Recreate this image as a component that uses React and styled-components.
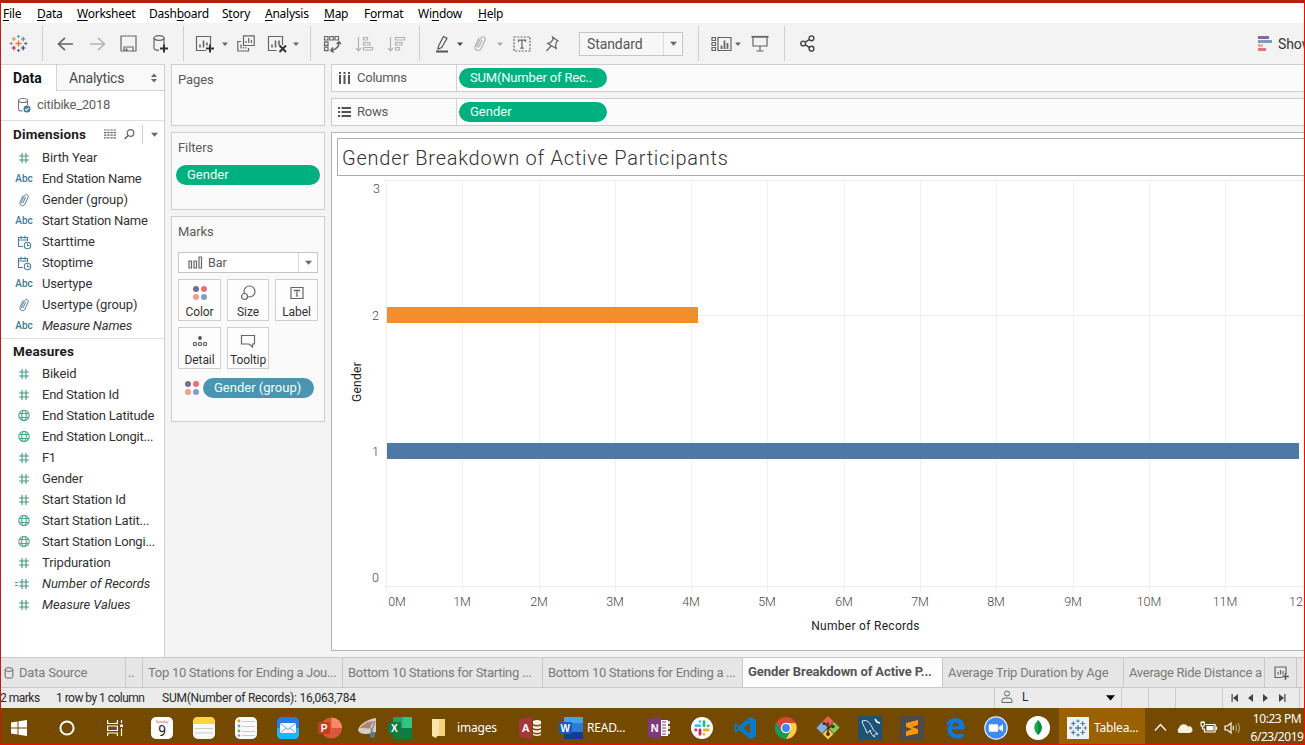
import React from "react";
import styled, { createGlobalStyle } from "styled-components";

const Global = createGlobalStyle`
  * { box-sizing: border-box; }
  body { margin: 0; overflow: hidden; font-family: Roboto, "Liberation Sans", sans-serif; font-size: 13px; color: #333; }
  svg { display: block; flex: none; overflow: visible; }
`;

const Screen = styled.div`
  position: relative;
  width: 1305px;
  height: 745px;
  display: flex;
  flex-direction: column;
  background: #f4f4f4;
  overflow: hidden;
  white-space: nowrap;
  &::after {
    content: "";
    position: absolute;
    inset: 0;
    border: solid #c11d0c;
    border-width: 3px 1px 1px 1px;
    border-top-color: #b5210c;
    border-right-color: #f00a00;
    border-bottom-color: #f00a00;
    pointer-events: none;
  }
`;

/* Menu bar */
const MenuBar = styled.div`
  height: 23px;
  flex: none;
  padding: 4px 0 0 3px;
  display: flex;
  background: #fff;
  font: 12px/20px "Noto Sans", "Open Sans", sans-serif;
  color: #000;
`;
const MenuItem = styled.span`
  width: ${(p) => p.$w}px;
  letter-spacing: -0.25px;
  flex: none;
  u { text-underline-offset: 2px; }
`;

/* Toolbar */
const Toolbar = styled.div`
  height: 41px;
  flex: none;
  display: flex;
  align-items: center;
  background: #f3f3f3;
`;
const Tool = styled.div`
  width: ${(p) => p.$w}px;
  margin-left: ${(p) => p.$ml}px;
  flex: none;
  display: flex;
  justify-content: center;
`;
const Separator = styled.div`
  width: 1px;
  height: ${(p) => p.$h || 35}px;
  margin-left: ${(p) => p.$ml}px;
  flex: none;
  background: #d0d0d0;
`;
const FitSelect = styled.div`
  width: 104px;
  height: 24px;
  margin-left: 20px;
  padding-left: 7px;
  flex: none;
  display: flex;
  align-items: center;
  border: 1px solid #c6c6c6;
  background: #f7f7f7;
  color: #555;
  font-size: 14px;
  letter-spacing: -0.1px;
`;
const SelectArrow = styled.div`
  width: 19px;
  align-self: stretch;
  margin-left: auto;
  display: flex;
  align-items: center;
  justify-content: center;
  border-left: 1px solid #dcdcdc;
`;
const ShowMe = styled.span`
  margin-left: 6px;
  font-size: 14px;
  letter-spacing: -0.1px;
  color: #333;
`;

/* Workspace */
const Workspace = styled.div`
  height: 593px;
  flex: none;
  display: flex;
`;
const Sidebar = styled.aside`
  width: 165px;
  flex: none;
  background: #fff;
  border-right: 1px solid #cfcfcf;
`;
const SideTabs = styled.div`
  display: flex;
  height: 27px;
`;
const SideTab = styled.div`
  width: ${(p) => p.$w}px;
  padding: 0 7px 0 ${(p) => (p.$active ? 13 : 12)}px;
  display: flex;
  align-items: center;
  justify-content: space-between;
  font-size: 14px;
  letter-spacing: ${(p) => (p.$active ? 0 : -0.2)}px;
  font-weight: ${(p) => (p.$active ? 700 : 400)};
  color: ${(p) => (p.$active ? "#111" : "#4a4a4a")};
  background: ${(p) => (p.$active ? "#fff" : "#f9f9f9")};
  border-top: 1px solid #d4d4d4;
  ${(p) => !p.$active && "border-left: 1px solid #d4d4d4; border-bottom: 1px solid #d4d4d4;"}
`;
const Source = styled.div`
  height: 30px;
  padding: 0 0 2px 17px;
  display: flex;
  align-items: center;
  gap: 6px;
  letter-spacing: -0.25px;
  color: #606060;
  border-bottom: 1px solid #dedede;
`;
const SideHeader = styled.div`
  height: ${(p) => p.$h}px;
  padding-left: 13px;
  display: flex;
  align-items: center;
  font-size: 13.5px;
  font-weight: 700;
  letter-spacing: 0.15px;
  color: #1c1c1c;
`;
const HeaderTool = styled.div`
  margin-left: ${(p) => p.$ml}px;
`;
const FieldList = styled.div`
  padding-bottom: 2px;
  border-bottom: ${(p) => (p.$last ? 0 : 1)}px solid #dedede;
`;
const Field = styled.div`
  height: 21px;
  display: flex;
  align-items: center;
  font-size: 13px;
  letter-spacing: ${(p) => p.$ls || 0}px;
  font-style: ${(p) => (p.$italic ? "italic" : "normal")};
  color: #333;
`;
const FieldIcon = styled.div`
  width: 42px;
  padding-left: 6px;
  flex: none;
  display: flex;
  justify-content: center;
  font: 500 10px Roboto, sans-serif;
  letter-spacing: 0;
  color: #3f7896;
`;

const Shelves = styled.div`
  width: 154px;
  margin-left: 6px;
  flex: none;
  display: flex;
  flex-direction: column;
  gap: 6px;
`;
const Card = styled.section`
  height: ${(p) => p.$h}px;
  padding: 7px 4px 0 6px;
  background: #fafafa;
  border: 1px solid #d0d0d0;
  color: #5a5a5a;
`;
const CardTitle = styled.div`
  height: 16px;
  line-height: 16px;
  letter-spacing: -0.1px;
`;
const Pill = styled.div`
  width: ${(p) => p.$w}px;
  height: 20px;
  padding-left: 11px;
  flex: none;
  border-radius: 10px;
  background: ${(p) => p.$bg || "#00b180"};
  color: #f2fffb;
  font-size: 13px;
  line-height: 19px;
  letter-spacing: ${(p) => p.$ls || 0}px;
`;
const FilterPill = styled(Pill)`
  margin: 9px 0 0 -2px;
`;
const MarkSelect = styled.div`
  width: 140px;
  height: 21px;
  margin-top: 12px;
  padding-left: 9px;
  display: flex;
  align-items: center;
  gap: 5px;
  border: 1px solid #c6c6c6;
  background: #fff;
  font-size: 12.5px;
`;
const MarkGrid = styled.div`
  margin-top: 6px;
  display: grid;
  grid-template-columns: 43px 42px 43px;
  column-gap: 6px;
  row-gap: 6px;
`;
const MarkButton = styled.div`
  height: 42px;
  padding-top: 5px;
  display: flex;
  flex-direction: column;
  align-items: center;
  gap: 3px;
  border: 1px solid #cecece;
  background: #fdfdfd;
  font-size: 12px;
  line-height: 17px;
  letter-spacing: -0.1px;
  color: #333;
`;
const ColorRow = styled.div`
  margin: 9px 0 0 6px;
  display: flex;
  align-items: center;
  gap: 3px;
`;

const Canvas = styled.main`
  flex: 1;
  margin-left: 6px;
  min-width: 0;
`;
const Shelf = styled.div`
  height: 28px;
  margin-bottom: 6px;
  display: flex;
  align-items: center;
  background: #fbfbfb;
  border: 1px solid #cfcfcf;
  border-right: 0;
`;
const ShelfName = styled.div`
  width: 125px;
  padding: 0 0 1px 6px;
  align-self: stretch;
  display: flex;
  align-items: center;
  gap: 6px;
  border-right: 1px solid #d4d4d4;
  margin-right: 2px;
  letter-spacing: -0.25px;
  color: #5a5a5a;
`;
const Sheet = styled.div`
  height: 519px;
  padding-top: 5px;
  background: #fff;
  border: 1px solid #b4b4b4;
  border-right: 0;
`;
const SheetTitle = styled.div`
  height: 38px;
  margin-left: 5px;
  padding-left: 4px;
  border: 1px solid #adadad;
  border-right: 0;
  font: 300 20px/39px Roboto, sans-serif;
  letter-spacing: 0.75px;
  color: #333;
`;

/* Sheet tabs and status bar */
const SheetTabs = styled.div`
  height: 31px;
  flex: none;
  display: flex;
  border-top: 1px solid #c9c9c9;
  background: #e6e6e6;
`;
const SheetTab = styled.div`
  width: ${(p) => p.$w}px;
  padding: 0 0 ${(p) => (p.$active ? 2 : 0)}px ${(p) => (p.$pl === undefined ? 5 : p.$pl)}px;
  flex: none;
  display: flex;
  align-items: center;
  gap: 5px;
  border-right: 1px solid #c9c9c9;
  border-bottom: 1px solid #c9c9c9;
  background: ${(p) => (p.$active ? "#fdfdfd" : "transparent")};
  color: ${(p) => (p.$active ? "#555" : "#7a7a7a")};
  font-weight: ${(p) => (p.$active ? 700 : 400)};
  letter-spacing: ${(p) => (p.$ls === undefined ? -0.29 : p.$ls)}px;
`;
const StatusBar = styled.div`
  height: 20px;
  flex: none;
  display: flex;
  align-items: center;
  background: #ebebeb;
  font-size: 12px;
  color: #2a2a2a;
`;
const StatusText = styled.span`
  width: ${(p) => p.$w}px;
  margin-left: ${(p) => p.$ml || 0}px;
  flex: none;
  letter-spacing: ${(p) => p.$ls || 0}px;
`;
const StatusCell = styled.div`
  width: ${(p) => p.$w}px;
  height: 20px;
  padding: 0 7px 0 5px;
  flex: none;
  display: flex;
  align-items: center;
  border-left: 1px solid #cdcdcd;
`;
const AccountCell = styled(StatusCell)`
  padding: 0 6px 2px;
`;
const PagerCell = styled(StatusCell)`
  padding: 0 13px 0 8px;
  justify-content: space-between;
`;

/* Task bar */
const TaskBar = styled.div`
  height: 37px;
  flex: none;
  padding-top: 2px;
  display: flex;
  align-items: center;
  background: #744900;
  color: #fff;
  font: 12px "Noto Sans", "Open Sans", sans-serif;
  letter-spacing: -0.2px;
`;
const TaskIcon = styled.div`
  width: ${(p) => p.$w}px;
  margin-left: ${(p) => p.$ml}px;
  flex: none;
  display: flex;
  justify-content: center;
`;
const TaskLabel = styled.span`
  width: ${(p) => p.$w}px;
  margin-left: ${(p) => p.$ml}px;
  flex: none;
`;
const ActiveTask = styled.div`
  width: 86px;
  height: 37px;
  margin: -2px 0 0 9px;
  padding: 2px 0 0 8px;
  flex: none;
  display: flex;
  align-items: center;
  background: #9a6100;
`;
const Clock = styled.div`
  width: 60px;
  margin-left: 6px;
  flex: none;
  text-align: center;
  line-height: 18px;
  letter-spacing: -0.45px;
`;

const Caret = ({ c = "#666", s = 6 }) => (
  <svg width={s} height={s} viewBox="0 0 6 6"><path d="M0 1.500h6L3 5z" fill={c} /></svg>
);
const Line = ({ w = 18, h = 18, c = "#666", sw = 1.2, children }) => (
  <svg width={w} height={h} viewBox={`0 0 ${w} ${h}`} fill="none" stroke={c} strokeWidth={sw}>{children}</svg>
);
const Plus = ({ x, y, r = 2, c, sw = 1 }) => (
  <path d={`M${x - r} ${y}h${2 * r}M${x} ${y - r}v${2 * r}`} stroke={c} strokeWidth={sw} />
);
const Dots = ({ s = 16 }) => (
  <svg width={s} height={s} viewBox="0 0 16 16">
    <circle cx="4" cy="4" r="3" fill="#7a6c90" />
    <circle cx="12" cy="4" r="3" fill="#e7707a" />
    <circle cx="4" cy="12" r="3" fill="#f0a080" />
    <circle cx="12" cy="12" r="3" fill="#7f9fc9" />
  </svg>
);
const Clip = ({ w = 14, h = 17, c = "#666" }) => (
  <svg width={w} height={h} viewBox="0 0 14 17" fill="none" stroke={c} strokeWidth="1.200">
    <path d="M9 5 6 11.500a1 1 0 0 1-1.900-.900L7.700 3.300a2.300 2.300 0 0 1 4.300 1.800L8.200 13.400a3.200 3.200 0 0 1-6-2.300L6 3" />
  </svg>
);

const HashIcon = ({ calc }) => (
  <svg width="15" height="12" viewBox="0 0 15 12" stroke="#4a9c83" strokeWidth="1.200" fill="none">
    <path d="M5 1v10M9 1v10M2 4h10M2 8h10" />
    {calc && <path d="M-2 4.500h3M-2 7.500h3" />}
  </svg>
);
const GlobeIcon = () => (
  <Line w={13} h={13} c="#4fa58a" sw={1.1}>
    <circle cx="6" cy="6.500" r="5.200" /><ellipse cx="6" cy="6.500" rx="2.300" ry="5" /><path d="M1.500 4.500h9M1.500 8.500h9" />
  </Line>
);
const DateIcon = () => (
  <Line w={14} h={14} c="#4a7f9d" sw={1.1}>
    <path d="M6 11.500H1.500v-9h9V6M1.500 5h9M4 .800v3M8 .800v3" /><circle cx="10.500" cy="10.500" r="3.200" /><path d="M10.500 8.500v2.200h2" />
  </Line>
);
const CylinderIcon = () => (
  <Line w={14} h={16} c="#777" sw={1.1}>
    <ellipse cx="6" cy="3.500" rx="4.500" ry="2" />
    <path d="M1.500 3.500v8.500c0 1.200 1.500 2 4 2M10.500 3.500V8" />
    <circle cx="10" cy="12" r="3.500" fill="#3b7ba5" stroke="none" />
    <path d="m8.300 12 1.300 1.300 2.200-2.500" stroke="#fff" />
  </Line>
);

const icons = {
  hash: <HashIcon />, calc: <HashIcon calc />, globe: <GlobeIcon />, date: <DateIcon />,
  abc: "Abc", clip: <Clip w={12} h={14} c="#4a7f9d" />,
};
const dimensions = [
  ["hash", "Birth Year", -0.1], ["abc", "End Station Name", -0.29], ["clip", "Gender (group)", -0.1],
  ["abc", "Start Station Name", -0.25], ["date", "Starttime", -0.1], ["date", "Stoptime", -0.15],
  ["abc", "Usertype", -0.15], ["clip", "Usertype (group)", -0.1], ["abc", "Measure Names", -0.15, true],
];
const measures = [
  ["hash", "Bikeid", -0.1], ["hash", "End Station Id", -0.25], ["globe", "End Station Latitude", -0.22],
  ["globe", "End Station Longit...", -0.23], ["hash", "F1", -0.5], ["hash", "Gender", -0.1],
  ["hash", "Start Station Id", -0.17], ["globe", "Start Station Latit...", -0.2],
  ["globe", "Start Station Longi...", -0.22], ["hash", "Tripduration", -0.1],
  ["calc", "Number of Records", -0.05, true], ["hash", "Measure Values", -0.1, true],
];
const Fields = ({ items, last }) => (
  <FieldList $last={last}>
    {items.map(([icon, name, ls, italic]) => (
      <Field key={name} $ls={ls} $italic={italic}><FieldIcon>{icons[icon]}</FieldIcon>{name}</Field>
    ))}
  </FieldList>
);

const TableauMark = ({ mono }) => {
  const c = (v) => (mono ? "#4b7ba8" : v);
  return (
    <svg width="19" height="19" viewBox="0 0 19 19">
      <Plus x={9.5} y={9.5} r={3} c={c("#e8762c")} sw={1.3} />
      <Plus x={4.8} y={5} r={2.2} c={c("#e8903a")} sw={1.2} />
      <Plus x={14.2} y={5} r={2.2} c={c("#5b879b")} sw={1.2} />
      <Plus x={4.8} y={14} r={2.2} c={c("#c72037")} sw={1.2} />
      <Plus x={14.2} y={14} r={2.2} c={c("#1f457e")} sw={1.2} />
      <Plus x={9.5} y={2.5} r={1.7} c={c("#7199a6")} />
      <Plus x={9.5} y={16.5} r={1.7} c={c("#5c6692")} />
      <Plus x={2.2} y={9.5} r={1.7} c={c("#7199a6")} />
      <Plus x={16.8} y={9.5} r={1.7} c={c("#5c6692")} />
    </svg>
  );
};

const months = ["0M", "1M", "2M", "3M", "4M", "5M", "6M", "7M", "8M", "9M", "10M", "11M"];
const gridX = [54, 130, 207, 283, 359, 435, 512, 588, 664, 741, 817, 893];
const AxisText = styled.text`
  font: 300 12.5px Roboto, sans-serif;
  fill: #4a4a4a;
`;
const AxisTitle = styled.text`
  font: 12px Roboto, sans-serif;
  letter-spacing: 0.3px;
  fill: #222;
`;
const Chart = () => (
  <svg width="973" height="470" viewBox="0 0 973 470">
    <g stroke="#efefef" shapeRendering="crispEdges">
      {gridX.map((x) => <path key={x} d={`M${x + 0.5} 4v411`} />)}
      <path d="M52 4.500h921M52 139.500h921M52 275.500h921M52 410.500h921" />
    </g>
    <rect x="55" y="131" width="311" height="16" fill="#f28e2b" />
    <rect x="55" y="267" width="912" height="16" fill="#4e79a7" />
    {[["3", 17], ["2", 143.5], ["1", 280], ["0", 406]].map(([t, y]) => (
      <AxisText key={t} x={t === "3" ? 48 : 47} y={y} textAnchor="end">{t}</AxisText>
    ))}
    {months.map((t, i) => (
      <AxisText key={t} x={i ? gridX[i] : 65} y="430" textAnchor="middle">{t}</AxisText>
    ))}
    <AxisText x="957" y="430">12</AxisText>
    <AxisTitle x="533.500" y="454" textAnchor="middle">Number of Records</AxisTitle>
    <AxisTitle transform="translate(29 206) rotate(-90)" textAnchor="middle">Gender</AxisTitle>
  </svg>
);

const Tile = ({ bg, children }) => (
  <svg width="22" height="22" viewBox="0 0 22 22"><rect width="22" height="22" rx="5" fill={bg} />{children}</svg>
);
const Letter = styled.text`
  font: 700 ${(p) => p.$s || 10}px "Liberation Sans", sans-serif;
  fill: #fff;
`;

function Taskbar() {
  return (
    <TaskBar>
      <TaskIcon $ml={10} $w={18}><svg width="18" height="16" viewBox="0 0 18 16" fill="#fff"><path d="M1 2.500 7.500 1.500v6H1zM8.500 1.300 17 0v7.500H8.500zM1 8.500h6.500v6L1 13.500zM8.500 8.500H17V16l-8.500-1.300z" /></svg></TaskIcon>
      <TaskIcon $ml={30} $w={18}><Line c="#fff" sw={2}><circle cx="9" cy="9" r="6.600" /></Line></TaskIcon>
      <TaskIcon $ml={30} $w={18}><Line w={18} h={16} c="#fff"><path d="M1.600 0v3.500h9.800V0M1.600 6h9.800v4.500H1.600zM1.600 16v-3h9.800v3M15.500 0v3M15.500 8.500V16" /><path d="M14.200 5.800H17" strokeWidth="2.500" /></Line></TaskIcon>
      <TaskIcon $ml={27} $w={22}><Tile bg="#fff"><text x="11" y="5.500" fontSize="4" textAnchor="middle" fill="#e04040">Sunday</text><text x="11" y="19" fontSize="14" textAnchor="middle" fill="#222" fontFamily="Roboto">9</text></Tile></TaskIcon>
      <TaskIcon $ml={20} $w={22}><Tile bg="#f8f8f6"><path d="M0 7V5q0-5 5-5h12q5 0 5 5v2z" fill="#ffd43d" /><path d="M2 11.500h18M2 16h18" stroke="#ccc" /></Tile></TaskIcon>
      <TaskIcon $ml={20} $w={22}><Tile bg="#fafafa"><g><circle cx="4" cy="4" r="1.400" fill="#f28a3a" /><circle cx="4" cy="9" r="1.400" fill="#4aa0e8" /><circle cx="4" cy="14" r="1.400" fill="#55b955" /><circle cx="4" cy="18.500" r="1.200" fill="#b06bd0" /></g><path d="M7 4.500h13M7 9.500h13M7 14.500h13M7 18.500h13" stroke="#ccc" /></Tile></TaskIcon>
      <TaskIcon $ml={20} $w={22}>
        <Tile bg="#1f7cf2"><path d="M0 11h22v6q0 5-5 5H5q-5 0-5-5z" fill="#22b4fa" /><rect x="3" y="6" width="16" height="10" rx="1.500" fill="#f4faff" /><path d="m3.500 6.500 7.500 6 7.500-6M4 15.500l5-4.500M18 15.500l-5-4.500" fill="none" stroke="#5fb2f2" /></Tile>
      </TaskIcon>
      <TaskIcon $ml={19} $w={24}><svg width="24" height="22" viewBox="0 0 24 22"><circle cx="13.500" cy="11" r="10.500" fill="#d9583b" /><path d="M13.500.500a10.500 10.500 0 0 1 10.500 10.500H13.500z" fill="#f58a66" /><rect y="5" width="12" height="12" rx="1" fill="#c43e1c" /><Letter x="2.800" y="15">P</Letter></svg></TaskIcon>
      <TaskIcon $ml={15} $w={20}><svg width="20" height="22" viewBox="0 0 20 22"><path d="M1 13C3 6 12 2 19 1v14c-5 2-16 4-18-2z" fill="#d9cdc4" /><path d="M3 11C6 7 12 4 17 4l-5 7.500z" fill="#b98072" /><path d="m10 5 6 11M18 4l-4 12" stroke="#7d8f94" strokeWidth="1.400" /><ellipse cx="15.500" cy="18" rx="2.500" ry="3.300" fill="#4f7f90" /></svg></TaskIcon>
      <TaskIcon $ml={11} $w={24}><svg width="24" height="22" viewBox="0 0 24 22"><rect x="5" width="19" height="22" rx="1" fill="#21a366" /><path d="M5 11h19v11H5z" fill="#107c41" /><path d="M14.500 0h9.500v11h-9.500z" fill="#33c481" /><rect y="5" width="13" height="12" rx="1" fill="#107c41" /><Letter x="3" y="15">X</Letter></svg></TaskIcon>
      <TaskIcon $ml={20} $w={14}><svg width="14" height="20" viewBox="0 0 14 20"><path d="M5 1h8v17H5z" fill="#f3d580" /><path d="M0 1h7v14l-3 5-4-2z" fill="#f9e6a6" /></svg></TaskIcon>
      <TaskLabel $ml={11} $w={43}>images</TaskLabel>
      <TaskIcon $ml={19} $w={22}><svg width="22" height="22" viewBox="0 0 22 22"><path d="M0 2 13 0v22L0 20z" fill="#a4373a" /><Letter x="2.800" y="15" $s={11}>A</Letter><g fill="#f6eeee"><path d="M14 4q4-2 8 0v3q-4 2-8 0zM14 8.500q4 1.800 8 0V11q-4 2-8 0zM14 12.500q4 1.800 8 0V15q-4 2-8 0zM14 16.500q4 1.800 8 0V18q-4 2-8 0z" /></g></svg></TaskIcon>
      <TaskIcon $ml={18} $w={24}><svg width="24" height="22" viewBox="0 0 24 22"><rect x="5" width="19" height="22" rx="1" fill="#2b7cd3" /><path d="M5 0h19v6H5z" fill="#41a5ee" /><path d="M5 15h19v7H5z" fill="#103f91" /><rect y="5" width="13" height="12" rx="1" fill="#185abd" /><Letter x="1.500" y="15">W</Letter></svg></TaskIcon>
      <TaskLabel $ml={4} $w={42}>READ...</TaskLabel>
      <TaskIcon $ml={19} $w={22}><svg width="22" height="22" viewBox="0 0 22 22"><path d="M0 2 13 0v22L0 20z" fill="#80397b" /><path d="M13 3h7v16h-7z" fill="#fff" /><path d="M14 5h4M14 8h4M14 11h4M14 14h4M14 17h4" stroke="#80397b" /><path d="M20 4h2v3h-2zM20 9h2v3h-2zM20 14h2v3h-2z" fill="#e6d6e5" /><Letter x="2.800" y="15" $s={11}>N</Letter></svg></TaskIcon>
      <TaskIcon $ml={21} $w={22}><svg width="22" height="22" viewBox="0 0 22 22"><circle cx="11" cy="11" r="11" fill="#fff" /><g strokeWidth="2.800" strokeLinecap="round"><path d="M9 8.700H4.800M9 4.600h-.100" stroke="#36c5f0" /><path d="M13 4.600v4.200M17.300 8.800h-.100" stroke="#2eb67d" /><path d="M13.200 13h4.100M13 17.300h.100" stroke="#ecb22e" /><path d="M9 13v4.300M4.800 13h.100" stroke="#e01e5a" /></g></svg></TaskIcon>
      <TaskIcon $ml={21} $w={23}><svg width="23" height="22" viewBox="0 0 23 22"><path d="m16 0 6 2.500v17L16 22 5 13l-3 2.500-1.500-1V7.500L2 6.500 5 9z" fill="#0a79c8" /><path d="M16 6v10l-6.500-5zM2 9v4l2-2z" fill="#744900" /></svg></TaskIcon>
      <TaskIcon $ml={18} $w={22}><svg width="22" height="22" viewBox="0 0 22 22"><circle cx="11" cy="11" r="11" fill="#db4437" /><path d="M1.500 5.500A11 11 0 0 0 11 22l5-8.500H6z" fill="#0f9d58" /><path d="M11 22A11 11 0 0 0 20.500 6H11l5 7.500z" fill="#ffcd40" /><circle cx="11" cy="11" r="5.200" fill="#fff" /><circle cx="11" cy="11" r="4" fill="#4285f4" /></svg></TaskIcon>
      <TaskIcon $ml={19} $w={24}><svg width="24" height="24" viewBox="0 0 24 24"><path d="m12 0 5.500 5.500L12 11 6.500 5.500z" fill="#e46058" /><path d="m6 6 5.500 5.500L6 17.500.500 12z" fill="#7cb0ee" /><path d="m18 6 5.500 5.500L18 17.500 12.500 12z" fill="#85c95b" /><path d="m12 12.500 5.500 5.500-5.500 5.500L6.500 18z" fill="#f3c84c" /><path d="M12 6v12M12 13l5-4M12 9 8 7.500" stroke="#4a3020" strokeWidth="1.500" fill="none" /><g fill="#4a3020"><circle cx="12" cy="18" r="1.900" /><circle cx="17" cy="10.500" r="1.800" /><circle cx="8" cy="7.500" r="1.500" /></g></svg></TaskIcon>
      <TaskIcon $ml={18} $w={24}><svg width="24" height="24" viewBox="0 0 24 24"><rect width="24" height="24" rx="2" fill="#1f5376" /><path d="M4 5c5-2 8 2 10 6 1 3 3 5 6 7-3 0-5 1-3 3-3-1-4-4-5-7-1 1-1 3-3 3-1-4-4-7-5-12z" fill="none" stroke="#e3f0f7" /><path d="m17 3 2 3 3 1" stroke="#fff" fill="none" strokeWidth="1.500" /></svg></TaskIcon>
      <TaskIcon $ml={18} $w={24}><svg width="24" height="24" viewBox="0 0 24 24"><rect width="24" height="24" rx="2" fill="#4b4b4b" /><path d="m6 7 12-3v5l-6 2 6 2v4.500L6 20v-4.500l6-2.500-6-2z" fill="#ff9800" /></svg></TaskIcon>
      <TaskIcon $ml={21} $w={20}><svg width="20" height="22" viewBox="0 0 20 22"><path d="M1 10C2 3.500 6 1 10.500 1 16.500 1 19.500 5 19.500 10v2.500H7c.200 5 7 6 11.500 3.500v4C11 23.500 2.500 20.500 2.500 13c0-3 1.500-5.500 4-7C4.500 6.500 2.500 8 1 10zm6-.800h7C14 4 7.500 4.500 7 9.200z" fill="#0c7ad8" /></svg></TaskIcon>
      <TaskIcon $ml={19} $w={24}><svg width="24" height="24" viewBox="0 0 24 24"><circle cx="12" cy="12" r="11.800" fill="#e6eefb" /><circle cx="12" cy="12" r="10.600" fill="#3d8bf7" /><rect x="4.800" y="8.300" width="9.500" height="7.500" rx="1.500" fill="#fff" /><path d="m15 11 4-2.800v7.600L15 13z" fill="#fff" /></svg></TaskIcon>
      <TaskIcon $ml={18} $w={24}><svg width="24" height="24" viewBox="0 0 24 24"><circle cx="12" cy="12" r="12" fill="#fff" /><path d="M12 4c5 5 5 10 0 15-5-5-5-10 0-15z" fill="#13aa52" /><path d="M12 4c5 5 5 10 0 15z" fill="#0c8a43" /></svg></TaskIcon>
      <ActiveTask>
        <svg width="22" height="22" viewBox="-1.500 -1.500 22 22"><rect x="-1.500" y="-1.500" width="22" height="22" fill="#eef3f7" /><TableauMark mono /></svg>
        <TaskLabel $ml={5} $w={47}>Tablea...</TaskLabel>
      </ActiveTask>
      <TaskIcon $ml={9} $w={13}><Line w={13} h={9} c="#fff" sw={1.3}><path d="m1 7.500 5.500-6 5.500 6" /></Line></TaskIcon>
      <TaskIcon $ml={9} $w={17}><svg width="17" height="10" viewBox="0 0 17 10"><path d="M3 10a3 3 0 0 1 0-5 5 5 0 0 1 9-1.500A3.400 3.400 0 0 1 14 10z" fill="#f5efe4" /></svg></TaskIcon>
      <TaskIcon $ml={7} $w={17}><Line w={17} h={13} c="#fff"><path d="M5.500 3.500H15V11H4.500V8M16.500 5.500v3.500" /><path d="M6.500 5h7v4.500h-7z" fill="#fff" stroke="none" /><path d="M1 1.500v2q0 2 1.700 2t1.700-2v-2zM2.700 5.500V8H5M1.800 0v1.500M3.600 0v1.500" /></Line></TaskIcon>
      <TaskIcon $ml={7} $w={17}><Line w={17} h={14} c="#fff"><path d="M1 5h2.500L7 2v10L3.500 9H1z" /><path d="M9 5q1.200 2 0 4" /><path d="M11.500 3.500q2.200 3.500 0 7M14 2q3 5 0 10" stroke="#b69b73" /></Line></TaskIcon>
      <Clock>10:23 PM<br />6/23/2019</Clock>
    </TaskBar>
  );
}

const menu = [
  ["", "F", "ile", 34], ["", "D", "ata", 40], ["", "W", "orksheet", 72], ["Dash", "b", "oard", 73], ["S", "t", "ory", 43],
  ["", "A", "nalysis", 59], ["", "M", "ap", 40], ["F", "o", "rmat", 54], ["Wi", "n", "dow", 60], ["", "H", "elp", 40],
];

export default function App() {
  return (
    <Screen>
      <Global />
      <MenuBar>
        {menu.map(([a, u, b, w]) => <MenuItem key={a + u + b} $w={w}>{a}<u>{u}</u>{b}</MenuItem>)}
      </MenuBar>
      <Toolbar>
        <Tool $ml={9} $w={19}><TableauMark /></Tool>
        <Separator $ml={14} />
        <Tool $ml={14} $w={17}><Line w={17} h={14} sw={1.7}><path d="M16 7H1.500M8 .800 1.500 7 8 13.200" /></Line></Tool>
        <Tool $ml={15} $w={17}><Line w={17} h={14} c="#b5b5b5" sw={1.6}><path d="M1 7h14.500M9 .800 15.500 7 9 13.200" /></Line></Tool>
        <Tool $ml={14} $w={17}><Line w={17} h={17}><path d="M1 1h15v15H1zM4 16v-4h9v4" /><path d="M5.500 13.500h2V16h-2z" fill="#666" stroke="none" /></Line></Tool>
        <Tool $ml={16} $w={16}><Line w={16} h={18}><ellipse cx="6" cy="3" rx="5" ry="2.300" /><path d="M1 3v10c0 1.500 2 2.300 5 2.300M11 3v7" /><Plus x={11} y={13.5} r={4} c="#333" sw={2} /></Line></Tool>
        <Separator $ml={14} />
        <Tool $ml={11} $w={20}><Line w={20} h={18}><path d="M11 15.500H1.500v-14h14V10" /><path d="M5 12.500v-3M8.500 12.500v-7M12 10.500v-3" strokeWidth="1.600" /><Plus x={15} y={13.5} r={4} c="#333" sw={2} /></Line></Tool>
        <Tool $ml={7} $w={6}><Caret s={6} /></Tool>
        <Tool $ml={9} $w={18}><Line w={18} h={17}><path d="M6.500.800h10.700v9.700H6.500zM4 6.500H.800V16h10.700v-3M9 8V6M11.700 8V3M14.400 8V5M4 13.500v-4M6.500 13.500V12M8.800 13.500V12" /></Line></Tool>
        <Tool $ml={12} $w={20}><Line w={20} h={18}><path d="M9.500 15.500H1.500v-14h14V10" /><path d="M5 12.500v-3M8.500 12.500v-7M12 10.500v-5" strokeWidth="1.600" /><path d="m12.500 10.500 6.500 6.500M19 10.500 12.500 17" stroke="#333" strokeWidth="2" /></Line></Tool>
        <Tool $ml={6} $w={6}><Caret s={6} /></Tool>
        <Separator $ml={11} />
        <Tool $ml={12} $w={19}><Line w={19} h={18}><path d="M1.500 1.500H5V5H1.500zM6.800 1.500h3.500V5H6.800zM12 1.500h3.500V5H12zM1.500 6.800H5v3.500H1.500zM1.500 12.200H5v3.500H1.500z" /><path d="M16 7.500c0 4-2.500 7-8 8M13.500 9 16 6.800 18 9M10 12.500 7.800 15.500l3 1.800" strokeWidth="1.500" /></Line></Tool>
        <Tool $ml={14} $w={18}><Line w={18} h={16} c="#b2b2b2"><path d="M2.500 1v13.500M0 12l2.500 2.800L5 12M7.500 1.500h4V4h-4zM7.500 6.500H14V9H7.500zM7.500 11.500h9V14h-9z" /></Line></Tool>
        <Tool $ml={14} $w={18}><Line w={18} h={16} c="#b2b2b2"><path d="M2.500 1v13.500M0 12l2.500 2.800L5 12M7.500 1.500h9V4h-9zM7.500 6.500H14V9H7.500zM7.500 11.500h4V14h-4z" /></Line></Tool>
        <Separator $ml={13} />
        <Tool $ml={15} $w={14}><Line w={14} h={18} c="#555"><path d="m3.500 11 5-9.500 3.500 1.800-5.300 9.200L3 14z" /><path d="M1 16.500h12" strokeWidth="2" /></Line></Tool>
        <Tool $ml={8} $w={6}><Caret s={6} c="#444" /></Tool>
        <Tool $ml={10} $w={14}><Clip c="#b2b2b2" /></Tool>
        <Tool $ml={10} $w={6}><Caret s={6} c="#aaa" /></Tool>
        <Tool $ml={10} $w={18}><Line w={18} h={16}><path d="M1 1h16v14H1z" strokeDasharray="2 1.300" /><path d="M5.500 6V4.200h7V6M9 4.200v8M7.200 12.200h3.600" /></Line></Tool>
        <Tool $ml={14} $w={14}><Line w={14} h={16}><path d="m7.500 1 5.500 4-1.500.800-1 3.700.700 3-8.500-5 2.700-.800 2.700-3.200zM6 10l-4.500 5" /></Line></Tool>
        <FitSelect>Standard<SelectArrow><Caret s={7} /></SelectArrow></FitSelect>
        <Separator $ml={15} />
        <Tool $ml={12} $w={21}><Line w={21} h={16}><path d="M1 1.500h3.500v3H1zM1 6.500h3.500v3H1zM1 11.500h3.500v3H1zM7 1.500h13v13H7z" /><path d="M10.500 13V9.500M13.500 13V4.500M16.500 13V7" strokeWidth="1.800" /></Line></Tool>
        <Tool $ml={3} $w={6}><Caret s={6} /></Tool>
        <Tool $ml={10} $w={18}><Line w={18} h={17}><path d="M.500 1.800h17" strokeWidth="1.800" /><path d="M2 2v9h14V2M9 11v5M5.500 16h7" /></Line></Tool>
        <Separator $ml={15} />
        <Tool $ml={15} $w={15}><Line w={15} h={17} c="#444" sw={1.4}><circle cx="3.200" cy="8.500" r="2.400" /><circle cx="11.500" cy="3.300" r="2.400" /><circle cx="11.500" cy="13.700" r="2.400" /><path d="m5.300 7.200 4-2.500M5.300 9.800l4 2.500" /></Line></Tool>
        <Tool $ml={443} $w={14}><svg width="14" height="15" viewBox="0 0 14 15"><path d="M0 0h11v3H0z" fill="#8a6a94" /><path d="M0 4h14v3H0z" fill="#7d9cc4" /><path d="M0 8h5v3H0z" fill="#f3a9a0" /><path d="M0 12h8v3H0z" fill="#e57381" /></svg></Tool>
        <ShowMe>Show</ShowMe>
      </Toolbar>

      <Workspace>
        <Sidebar>
          <SideTabs>
            <SideTab $w={56} $active>Data</SideTab>
            <SideTab $w={108}>Analytics<Line w={6} h={10} sw={0}><path d="M0 4 3 .500 6 4zM0 6l3 3.500L6 6z" fill="#667" /></Line></SideTab>
          </SideTabs>
          <Source><CylinderIcon />citibike_2018</Source>
          <SideHeader $h={26}>
            Dimensions
            <HeaderTool $ml={18}><Line w={12} h={10} sw={1.2}><path d="M0 1h12M0 3.600h12M0 6.200h12M0 8.800h12" strokeDasharray="2.400 .800" /></Line></HeaderTool>
            <HeaderTool $ml={8}><Line w={11} h={11}><circle cx="6.500" cy="4" r="3.300" /><path d="M4 6.500.800 10" strokeWidth="1.600" /></Line></HeaderTool>
            <Separator $ml={7} $h={19} />
            <HeaderTool $ml={8}><Caret s={7} /></HeaderTool>
          </SideHeader>
          <Fields items={dimensions} />
          <SideHeader $h={24}>Measures</SideHeader>
          <Fields items={measures} last />
        </Sidebar>

        <Shelves>
          <Card $h={62}><CardTitle>Pages</CardTitle></Card>
          <Card $h={78}>
            <CardTitle>Filters</CardTitle>
            <FilterPill $w={144}>Gender</FilterPill>
          </Card>
          <Card $h={206}>
            <CardTitle>Marks</CardTitle>
            <MarkSelect>
              <Line w={15} h={13}><path d="M1 5h2.500v7H1zM6 5h2.500v7H6zM11 1h2.500v11H11z" /></Line>Bar
              <SelectArrow><Caret s={7} /></SelectArrow>
            </MarkSelect>
            <MarkGrid>
              <MarkButton><Dots />Color</MarkButton>
              <MarkButton><Line w={16} h={16}><circle cx="9.500" cy="6.500" r="5.500" /><circle cx="4.500" cy="11.500" r="3" fill="#fdfdfd" /></Line>Size</MarkButton>
              <MarkButton><Line w={14} h={16}><path d="M1 2.500h12v11H1zM4.500 6.500V5.300h5v1.200M7 5.300V11M5.800 11h2.400" /></Line>Label</MarkButton>
              <MarkButton><Line w={16} h={16}><circle cx="8" cy="5" r="1.900" fill="#555" stroke="none" /><circle cx="3" cy="11" r="1.600" /><circle cx="8" cy="11" r="1.600" /><circle cx="13" cy="11" r="1.600" /></Line>Detail</MarkButton>
              <MarkButton><Line w={16} h={16}><path d="M1.500 2.500h13v8.500h-2v3l-3.500-3H1.500z" /></Line>Tooltip</MarkButton>
            </MarkGrid>
            <ColorRow><Dots /><Pill $w={111} $bg="#4996b2">Gender (group)</Pill></ColorRow>
          </Card>
        </Shelves>

        <Canvas>
          <Shelf>
            <ShelfName><Line w={13} h={12} c="#555" sw={2}><path d="M2 0v12M6.500 0v12M11 0v12" strokeDasharray="2 1 9" /></Line>Columns</ShelfName>
            <Pill $w={148} $ls={-0.17}>SUM(Number of Rec..</Pill>
          </Shelf>
          <Shelf>
            <ShelfName><Line w={13} h={12} c="#555" sw={2}><path d="M0 2h13M0 6h13M0 10h13" strokeDasharray="2 1.500 9.500" /></Line>Rows</ShelfName>
            <Pill $w={148}>Gender</Pill>
          </Shelf>
          <Sheet>
            <SheetTitle>Gender Breakdown of Active Participants</SheetTitle>
            <Chart />
          </Sheet>
        </Canvas>
      </Workspace>

      <SheetTabs>
        <SheetTab $w={126} $pl={4} $ls={-0.2}><Line w={10} h={12} sw={1}><ellipse cx="5" cy="2.500" rx="3.800" ry="1.800" /><path d="M1.200 2.500v7.200q0 1.300 1.300 1.300h5q1.300 0 1.300-1.300V2.500" /></Line>Data Source</SheetTab>
        <SheetTab $w={17} $pl={2}>..</SheetTab>
        <SheetTab $w={200}>Top 10 Stations for Ending a Jou...</SheetTab>
        <SheetTab $w={200}>Bottom 10 Stations for Starting ...</SheetTab>
        <SheetTab $w={200}>Bottom 10 Stations for Ending a ...</SheetTab>
        <SheetTab $w={200} $active $ls={-0.09}>Gender Breakdown of Active P...</SheetTab>
        <SheetTab $w={181} $ls={-0.22}>Average Trip Duration by Age</SheetTab>
        <SheetTab $w={141}>Average Ride Distance a</SheetTab>
        <SheetTab $w={32} $pl={9}><Line w={15} h={14}><path d="M8 11.500H1V1h11v7M4 8.500V6M6.500 8.500V4M9 8.500V5" /><Plus x={11.5} y={10.5} r={3.3} c="#555" sw={1.5} /></Line></SheetTab>
        <SheetTab $w={9} />
      </SheetTabs>
      <StatusBar>
        <StatusText $w={56} $ls={-0.5}>2 marks</StatusText>
        <StatusText $w={106} $ls={-0.53}>1 row by 1 column</StatusText>
        <StatusText $w={832} $ls={-0.24}>SUM(Number of Records): 16,063,784</StatusText>
        <AccountCell $w={127}>
          <Line w={12} h={14} sw={1}><circle cx="6" cy="3.500" r="2.500" /><path d="M1 12.500v-2q0-2.500 3-2.500h4q3 0 3 2.500v2z" /></Line>
          <StatusText $ml={9} $w={84}>L</StatusText>
          <Caret s={9} c="#000" />
        </AccountCell>
        <StatusCell $w={27} /><StatusCell $w={27} /><StatusCell $w={47} />
        <PagerCell $w={77}>
          <svg width="7" height="8" viewBox="0 0 7 8"><path d="M.500 0h1.200v8H.500zM7 0v8L2 4z" fill="#444" /></svg>
          <svg width="6" height="8" viewBox="0 0 6 8"><path d="M5 0v8L0 4z" fill="#444" /></svg>
          <svg width="6" height="8" viewBox="0 0 6 8"><path d="M0 0v8l5-4z" fill="#444" /></svg>
          <svg width="7" height="8" viewBox="0 0 7 8"><path d="M0 0v8l5-4zM5.300 0h1.200v8H5.300z" fill="#444" /></svg>
        </PagerCell>
        <StatusCell $w={6} />
      </StatusBar>
      <Taskbar />
    </Screen>
  );
}
